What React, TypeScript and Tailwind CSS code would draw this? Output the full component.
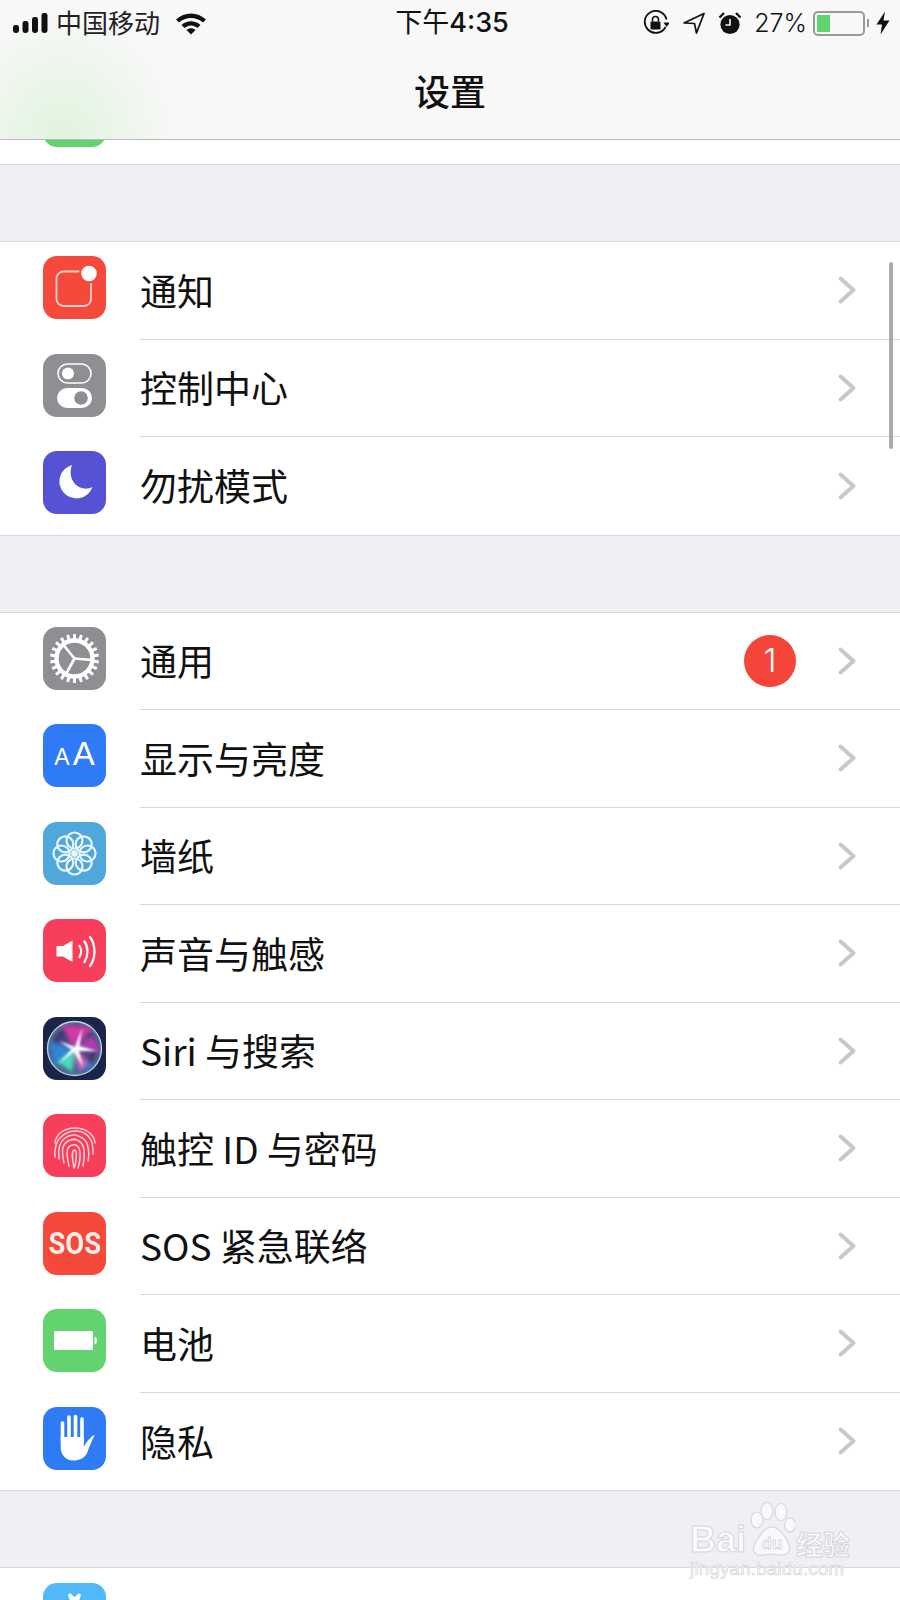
const font = "font-['Noto_Sans_CJK_SC','Noto_Sans',sans-serif]"

function Tile({ color, children }: { color: string; children?: React.ReactNode }) {
  return (
    <div className={`relative h-[63px] w-[63px] shrink-0 overflow-hidden rounded-[14px] ${color}`}>
      {children}
    </div>
  )
}

function Glyph({ children }: { children: React.ReactNode }) {
  return (
    <svg viewBox="0 0 63 63" className="absolute inset-0 h-[63px] w-[63px]">
      {children}
    </svg>
  )
}

function NotifyIcon() {
  return (
    <Tile color="bg-[#f5493b]">
      <Glyph>
        <rect x="13.5" y="15.5" width="34.5" height="34.5" rx="7" fill="none" stroke="#fbd0ca" strokeWidth="1.8" />
        <circle cx="46" cy="17.5" r="10" fill="#f5493b" />
        <circle cx="46" cy="17.5" r="7.8" fill="#fff" />
      </Glyph>
    </Tile>
  )
}

function ControlIcon() {
  return (
    <Tile color="bg-[#8e8e93]">
      <Glyph>
        <rect x="15" y="10" width="33" height="19" rx="9.5" fill="none" stroke="#fff" strokeWidth="1.6" />
        <circle cx="25" cy="19.5" r="6" fill="#fff" />
        <rect x="14" y="34" width="35" height="20" rx="10" fill="#fff" />
        <circle cx="38" cy="44" r="6.8" fill="#8e8e93" />
      </Glyph>
    </Tile>
  )
}

function MoonIcon() {
  return (
    <Tile color="bg-[#5552d3]">
      <Glyph>
        <path d="M29 14A17 17 0 1 0 49.5 36C38 42 23 31 29 14Z" fill="#fff" />
      </Glyph>
    </Tile>
  )
}

function GearIcon() {
  const teeth = Array.from({ length: 22 }, (_, i) => (i * 360) / 22)
  return (
    <Tile color="bg-[#8e8e93]">
      <Glyph>
        {teeth.map((a) => (
          <line key={a} x1="31.5" y1="12" x2="31.5" y2="7" stroke="#fff" strokeWidth="3" transform={`rotate(${a} 31.5 31.5)`} />
        ))}
        <circle cx="31.5" cy="31.5" r="18" fill="none" stroke="#fff" strokeWidth="4.4" />
        <g stroke="#fff" strokeWidth="2.6">
          <line x1="31.5" y1="31.5" x2="20" y2="17.5" />
          <line x1="31.5" y1="31.5" x2="49" y2="33" />
          <line x1="31.5" y1="31.5" x2="23" y2="47" />
        </g>
      </Glyph>
    </Tile>
  )
}

function DisplayIcon() {
  return (
    <Tile color="bg-[#2f7af5]">
      <div className="flex h-full items-baseline justify-center gap-[3px] pt-[12px] font-['Liberation_Sans',sans-serif] leading-[36px] text-white">
        <span className="text-[23px]">A</span>
        <span className="text-[33px]">A</span>
      </div>
    </Tile>
  )
}

function FlowerIcon() {
  const petals = Array.from({ length: 8 }, (_, i) => i * 45)
  return (
    <Tile color="bg-[#4fa8dc]">
      <Glyph>
        <g fill="none" stroke="#eaf6fc" strokeWidth="2.2">
          {petals.map((a) => (
            <circle key={a} cx="31.5" cy="18.5" r="8" transform={`rotate(${a} 31.5 31.5)`} />
          ))}
        </g>
        <circle cx="31.5" cy="31.5" r="3.4" fill="#eaf6fc" />
      </Glyph>
    </Tile>
  )
}

function SoundIcon() {
  return (
    <Tile color="bg-[#f73f5c]">
      <Glyph>
        <path d="M13.5 27H20L29.5 21.5V43L20 37.5H13.5Z" fill="#fff" />
        <g fill="none" stroke="#fff" strokeWidth="2.2" strokeLinecap="round">
          <path d="M36.5 27C38.5 30 38.5 34.5 36.5 38" />
          <path d="M41.5 22.5C45.5 28 45.5 36.5 41.5 43" />
          <path d="M47 18C53 26 53 39 47 47" />
        </g>
      </Glyph>
    </Tile>
  )
}

function SiriIcon() {
  return (
    <Tile color="bg-[#1a2348]">
      <Glyph>
        <defs>
          <radialGradient id="siri-ball" cx="50%" cy="50%" r="50%">
            <stop offset="0%" stopColor="#6a5594" />
            <stop offset="75%" stopColor="#3f3a70" />
            <stop offset="100%" stopColor="#557596" />
          </radialGradient>
          <filter id="siri-blur">
            <feGaussianBlur stdDeviation="2" />
          </filter>
          <filter id="siri-soft">
            <feGaussianBlur stdDeviation="0.9" />
          </filter>
        </defs>
        <circle cx="31.5" cy="31.5" r="27" fill="url(#siri-ball)" />
        <g filter="url(#siri-blur)">
          <path d="M32 32L18 8L50 10Z" fill="#d23aa6" />
          <path d="M32 32L6 24L10 48L26 42Z" fill="#2f86d2" />
          <path d="M32 32L50 18L58 36Z" fill="#b03cb0" />
          <path d="M32 32L14 46L30 56Z" fill="#4cdcbc" />
          <path d="M32 32L52 50L34 56Z" fill="#4276d0" />
          <path d="M31 31L44 44L37 54Z" fill="#e65aa0" />
        </g>
        <path d="M32 30L39 11L36.5 29L54 34L36 34L40 50L31 35L15 47L28.5 32.5L16 24Z" fill="#f0feff" filter="url(#siri-soft)" />
        <circle cx="31.5" cy="31.5" r="27" fill="none" stroke="#b9d6dc" strokeWidth="1.3" />
      </Glyph>
    </Tile>
  )
}

function TouchIcon() {
  return (
    <Tile color="bg-[#f73f5c]">
      <Glyph>
        <g fill="none" stroke="#fbd3da" strokeWidth="1.5" strokeLinecap="round">
          <path d="M12 29C14 9 50 9 52 29" />
          <path d="M12 43C11 37 13 27 18 23C27 14 42 15 48 26C50 30 50 36 50 40" />
          <path d="M16 45C15 37 15 29 22 24C30 18 43 22 45 33C46 38 46 43 45 47" />
          <path d="M21 49C19 39 18 31 25 27C32 23 40 27 41 36C41.5 41 41 47 40 52" />
          <path d="M26 52C24 43 22 34 28 31.5C33 29 36.5 33 37 38C37.5 43 36.5 49 35 54" />
          <path d="M31 54C30 47 27.5 37 31.5 36C34.5 35.5 33.5 47 31.5 53" />
        </g>
      </Glyph>
    </Tile>
  )
}

function SosIcon() {
  return (
    <Tile color="bg-[#f5493b]">
      <div className="flex h-full items-center justify-center font-['Roboto',sans-serif] text-[31px] font-bold leading-none text-[#fdeeea]">
        <span className="scale-x-[0.88]">SOS</span>
      </div>
    </Tile>
  )
}

function BatteryIcon() {
  return (
    <Tile color="bg-[#62d36e]">
      <Glyph>
        <rect x="11" y="22" width="39" height="19" rx="1.5" fill="#fff" />
        <path d="M51.5 27.5C53 28 54 29 54 31.5C54 34 53 35 51.5 35.5Z" fill="#fff" />
      </Glyph>
    </Tile>
  )
}

function HandIcon() {
  return (
    <Tile color="bg-[#2f7af5]">
      <Glyph>
        <g stroke="#fff" strokeWidth="3.6" strokeLinecap="round">
          <line x1="19.5" y1="16" x2="19.5" y2="34" />
          <line x1="26" y1="10" x2="26" y2="32" />
          <line x1="32.5" y1="9.5" x2="32.5" y2="32" />
          <line x1="39" y1="12" x2="39" y2="34" />
        </g>
        <path d="M17.7 30H40.8V40C43 35.5 46.5 30.5 52 27.5C49 33 46.5 40 44 46C41.5 51.5 36 53.5 30.5 53.5C22.5 53.5 17.7 47.5 17.7 40Z" fill="#fff" />
      </Glyph>
    </Tile>
  )
}

function Chevron() {
  return (
    <svg viewBox="0 0 20 30" className="h-[30px] w-[20px] shrink-0">
      <path d="M3.5 3.5L16.5 15L3.5 26.5" fill="none" stroke="#c7c7cc" strokeWidth="4" strokeLinecap="round" strokeLinejoin="round" />
    </svg>
  )
}

type Item = { label: string; icon: React.ReactNode; badge?: string }

function Row({ item, last }: { item: Item; last: boolean }) {
  return (
    <div className="flex h-[97.5px] items-center pl-[43px]">
      <div className="mb-[6px]">{item.icon}</div>
      <div className={`ml-[34px] flex h-full min-w-0 flex-1 items-center pr-[43px] ${last ? "" : "border-b border-[#d9d9dc]"}`}>
        <span className="flex-1 text-[37px] leading-none text-[#111]">{item.label}</span>
        {item.badge && (
          <span className="mr-[41px] flex h-[52px] w-[52px] items-center justify-center rounded-full bg-[#f5453a] font-['Inter',sans-serif] text-[33px] font-light leading-none text-white">
            {item.badge}
          </span>
        )}
        <Chevron />
      </div>
    </div>
  )
}

function Group({ items }: { items: Item[] }) {
  return (
    <div className="border-y border-[#d9d9dc] bg-white">
      {items.map((item, i) => (
        <Row key={item.label} item={item} last={i === items.length - 1} />
      ))}
    </div>
  )
}

function SignalBars() {
  return (
    <svg viewBox="0 0 36 22" className="h-[22px] w-[36px]">
      <rect x="0" y="13" width="6" height="8" rx="2.4" fill="#111" />
      <rect x="9.5" y="9" width="6" height="12" rx="2.4" fill="#111" />
      <rect x="19" y="5" width="6" height="16" rx="2.4" fill="#111" />
      <rect x="28.5" y="1" width="6" height="20" rx="2.4" fill="#111" />
    </svg>
  )
}

function WifiGlyph() {
  return (
    <svg viewBox="0 0 32 24" className="h-[24px] w-[32px]">
      <path d="M1 8.5C9.5 0.5 22.5 0.5 31 8.5L28 11.5C21 5.5 11 5.5 4 11.5Z" fill="#111" />
      <path d="M6.5 14C12 9 20 9 25.5 14L22.5 17C18.5 13.5 13.5 13.5 9.5 17Z" fill="#111" />
      <path d="M11.5 19C14 16.5 18 16.5 20.5 19L16 23.5Z" fill="#111" />
    </svg>
  )
}

function StatusIcons() {
  return (
    <div className="flex flex-1 items-center justify-end">
      <svg viewBox="0 0 26 26" className="h-[26px] w-[26px]">
        <path d="M22.5 17A11 11 0 1 1 23.5 9.5" fill="none" stroke="#111" strokeWidth="1.8" />
        <path d="M20.5 12.5L27 12.5L23.5 17Z" fill="#111" />
        <rect x="7.5" y="11.5" width="10" height="8" rx="1.2" fill="#111" />
        <path d="M9.5 11.5V9.5A3 3 0 0 1 15.5 9.5V11.5" fill="none" stroke="#111" strokeWidth="1.6" />
      </svg>
      <svg viewBox="0 0 22 22" className="ml-[14px] h-[22px] w-[22px]">
        <path d="M1 11L21 1.5L13.5 21L11.5 11.5Z" fill="none" stroke="#111" strokeWidth="1.7" strokeLinejoin="round" />
      </svg>
      <svg viewBox="0 0 24 24" className="ml-[13px] h-[24px] w-[24px]">
        <circle cx="12" cy="13.5" r="9.6" fill="#111" />
        <path d="M12 8V14H7.5" fill="none" stroke="#f8f8f8" strokeWidth="1.6" />
        <path d="M1.5 6.5L6 2M22.5 6.5L18 2" stroke="#111" strokeWidth="2.4" />
      </svg>
      <span className="ml-[12px] font-['Inter',sans-serif] text-[25px] font-light leading-none text-[#111]">27%</span>
      <div className="ml-[6px] h-[25px] w-[52px] rounded-[5px] border-2 border-[#9a9a9a] p-[2px]">
        <div className="h-full w-[13px] bg-[#5fd36e]" />
      </div>
      <div className="ml-[2px] h-[8px] w-[2px] bg-[#9a9a9a]" />
      <svg viewBox="0 0 16 24" className="ml-[6px] h-[24px] w-[16px]">
        <path d="M10 0.5L1.5 13.5H7L5.5 23.5L14.5 9.5H8.5Z" fill="#111" />
      </svg>
    </div>
  )
}

function Header() {
  return (
    <header className="h-[140px] border-b border-[#b9b9bb] bg-[#f8f8f8] bg-[radial-gradient(ellipse_115px_125px_at_62px_135px,#dff4df_0%,#ecf6ea_50%,#f8f8f8_100%)]">
      <div className="flex h-[46px] items-center pl-[13px] pr-[9px]">
        <div className="flex flex-1 items-center">
          <SignalBars />
          <span className="mb-[3px] ml-[7px] text-[26px] leading-none text-[#222]">中国移动</span>
          <span className="ml-[15px]"><WifiGlyph /></span>
        </div>
        <span className="mb-[3px] text-[27px] leading-none text-[#111]">
          下午<span className="font-['Inter',sans-serif] font-medium">4:35</span>
        </span>
        <StatusIcons />
      </div>
      <div className="flex h-[93px] items-center justify-center pb-[5px] text-[36px] font-medium leading-none text-[#111]">
        设置
      </div>
    </header>
  )
}

function Watermark() {
  return (
    <div className="pointer-events-none absolute left-[690px] top-[1502px] w-[170px] text-[#fbfbfc]">
      <div className="flex items-end font-['Liberation_Sans',sans-serif] font-bold leading-none [-webkit-text-stroke:1px_#d6d6da]">
        <span className="text-[36px]">Bai</span>
        <svg viewBox="0 0 50 56" className="ml-[-1px] h-[56px] w-[50px]">
          <g fill="#f9f9fb" stroke="#d6d6da" strokeWidth="1.2">
            <ellipse cx="12" cy="18" rx="6" ry="8" />
            <ellipse cx="22" cy="9" rx="6" ry="8.5" />
            <ellipse cx="36" cy="10" rx="6" ry="8.5" />
            <ellipse cx="45" cy="23" rx="5.5" ry="7" />
            <path d="M27 25C35 25 47 42 44 49C41 56 32 52 27 52C22 52 13 56 9 50C6 43 19 25 27 25Z" />
          </g>
          <text x="27" y="47" textAnchor="middle" fontSize="17" fontWeight="700" fill="#f9f9fb" stroke="#d6d6da" strokeWidth="0.8" fontFamily="Liberation Sans, sans-serif">du</text>
        </svg>
        <span className="ml-[1px] mb-[1px] font-['Noto_Sans_CJK_SC',sans-serif] text-[27px]">经验</span>
      </div>
      <div className="mt-[2px] font-['Liberation_Sans',sans-serif] text-[18.5px] leading-none tracking-[0.3px] [-webkit-text-stroke:0.7px_#d6d6da]">
        jingyan.baidu.com
      </div>
    </div>
  )
}

const groupOne: Item[] = [
  { label: "通知", icon: <NotifyIcon /> },
  { label: "控制中心", icon: <ControlIcon /> },
  { label: "勿扰模式", icon: <MoonIcon /> },
]

const groupTwo: Item[] = [
  { label: "通用", icon: <GearIcon />, badge: "1" },
  { label: "显示与亮度", icon: <DisplayIcon /> },
  { label: "墙纸", icon: <FlowerIcon /> },
  { label: "声音与触感", icon: <SoundIcon /> },
  { label: "Siri 与搜索", icon: <SiriIcon /> },
  { label: "触控 ID 与密码", icon: <TouchIcon /> },
  { label: "SOS 紧急联络", icon: <SosIcon /> },
  { label: "电池", icon: <BatteryIcon /> },
  { label: "隐私", icon: <HandIcon /> },
]

export default function App() {
  return (
    <div className={`relative h-[1600px] w-[900px] overflow-hidden bg-[#efeff4] ${font}`}>
      <Header />

      {/* row scrolled under the header */}
      <div className="h-[25px] overflow-hidden border-b border-[#d9d9dc] bg-white pl-[43px]">
        <div className="-mt-[56px]">
          <Tile color="bg-[#62d36e]" />
        </div>
      </div>

      <div className="h-[76px]" />
      <Group items={groupOne} />
      <div className="h-[76px]" />
      <Group items={groupTwo} />
      <div className="h-[76px]" />

      {/* next group, cut by the window */}
      <div className="border-t border-[#d9d9dc] bg-white pl-[43px] pt-[15px]">
        <Tile color="bg-[#52b9f9]">
          <Glyph>
            <path d="M25 12C26 10 28 10 29 12L31.5 14L34 12C35 10 37 10 38 12L36 18H27Z" fill="#fff" />
          </Glyph>
        </Tile>
      </div>

      <div className="absolute right-[7px] top-[262px] h-[187px] w-[4px] rounded-full bg-[#ababab]" />
      <Watermark />
    </div>
  )
}
